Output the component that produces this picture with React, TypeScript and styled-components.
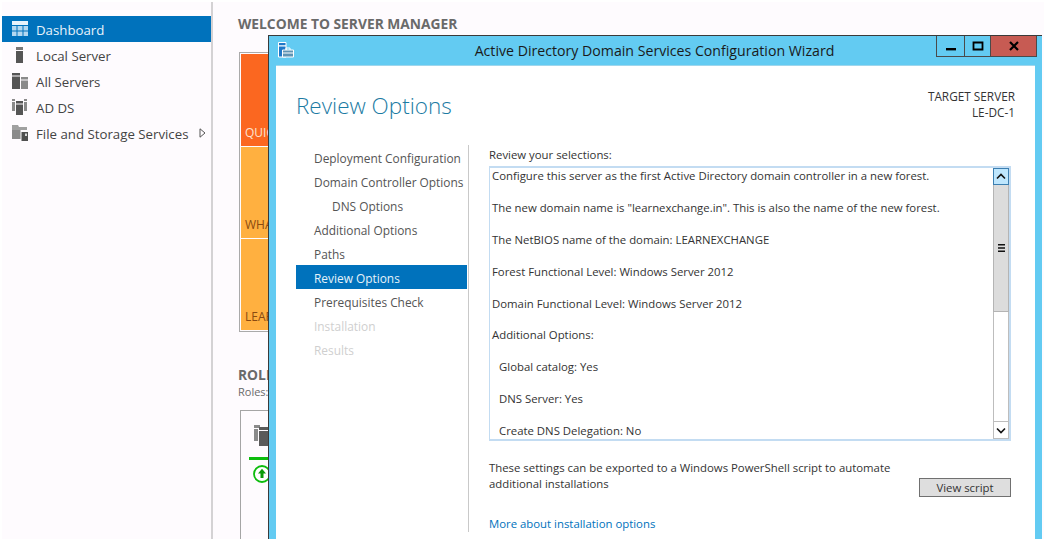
import React from "react";
import styled, { createGlobalStyle } from "styled-components";

const GlobalStyle = createGlobalStyle`
  html, body {
    margin: 0;
    padding: 0;
    background: #fff;
  }
  * {
    box-sizing: border-box;
  }
  body {
    font-family: "Open Sans", "Noto Sans", "Liberation Sans", sans-serif;
    font-size: 12px;
  }
`;

const Screen = styled.div`
  position: relative;
  width: 1044px;
  height: 539px;
  overflow: hidden;
  display: flex;
  background: #fff;
  padding: 2px 0 0 2px;
`;

const Sidebar = styled.nav`
  width: 211px;
  flex: none;
  background: #fefbfe;
  padding-top: 14px;
  border-right: 2px solid #d4d2d4;
`;

const SideRow = styled.div<{ $active?: boolean }>`
  height: 26px;
  display: flex;
  align-items: center;
  gap: 8px;
  padding-left: 10px;
  font-size: 13.25px;
  white-space: nowrap;
  background: ${(p) => (p.$active ? "#0072bc" : "transparent")};
  color: ${(p) => (p.$active ? "#e8f3fb" : "#444")};
`;

const SideLabel = styled.span`
  padding-top: 2px;
`;

const SideIcon = styled.svg`
  width: 16px;
  height: 16px;
  flex: none;
`;

const Caret = styled.svg`
  width: 7px;
  height: 10px;
  margin-left: 3px;
`;

const Main = styled.main`
  flex: 1;
  background: #fefbfe;
  padding: 14px 0 0 25px;
  min-width: 0;
`;

const Heading = styled.h2`
  margin: 0;
  font-size: 13.8px;
  line-height: 16px;
  font-weight: 700;
  color: #6a6a6a;
  white-space: nowrap;
`;

const Tiles = styled.div`
  margin: 20px 0 0 1px;
  width: 120px;
  border: 1px solid #aaa;
  padding: 1px;
  display: flex;
  flex-direction: column;
  gap: 1px;
`;

const Tile = styled.div<{ $bg: string; $h: number; $fg: string }>`
  height: ${(p) => p.$h}px;
  background: ${(p) => p.$bg};
  color: ${(p) => p.$fg};
  display: flex;
  align-items: flex-end;
  padding: 0 0 5px 4px;
  font-size: 12px;
  line-height: 16px;
`;

const RolesSection = styled.section`
  margin-top: 35px;
`;

const Sub = styled.div`
  font-size: 11px;
  line-height: 16px;
  color: #6a6a6a;
  margin-top: 1px;
`;

const RoleCard = styled.div`
  margin: 10px 0 0 2px;
  width: 120px;
  height: 140px;
  border: 1px solid #a5a5a5;
  padding: 14px 0 0 13px;
`;

const RoleIcon = styled.svg`
  display: block;
  width: 24px;
  height: 22px;
`;

const RoleBar = styled.div`
  height: 3px;
  background: #0cbc0c;
  margin: 10px 0 0 -5px;
`;

const StatusIcon = styled.svg`
  display: block;
  width: 18px;
  height: 18px;
  margin: 5px 0 0 -1px;
`;

const Wizard = styled.div`
  position: absolute;
  left: 268px;
  top: 35px;
  width: 774px;
  height: 520px;
  background: #63cbf2;
  border-top: 1px solid #3a3a3a;
  border-left: 1px solid #3a3a3a;
  display: flex;
  flex-direction: column;
`;

const TitleBar = styled.header`
  position: relative;
  height: 29px;
  flex: none;
  display: flex;
  align-items: center;
  justify-content: center;
  padding-right: 2px;
  font-size: 14.15px;
  color: #1a1a1a;
`;

const TitleIcon = styled.svg`
  position: absolute;
  left: 9px;
  top: 6px;
  width: 18px;
  height: 18px;
`;

const Controls = styled.div`
  position: absolute;
  right: 5px;
  top: 0;
  height: 21px;
  display: flex;
  border: 1px solid #4a4a4a;
  border-top: none;
`;

const Control = styled.div<{ $w: number; $close?: boolean }>`
  width: ${(p) => p.$w}px;
  display: flex;
  align-items: center;
  justify-content: center;
  background: ${(p) => (p.$close ? "#c75b53" : "transparent")};
  & + & {
    border-left: 1px solid #4a4a4a;
  }
`;

const Glyph = styled.svg`
  width: 12px;
  height: 12px;
`;

const Client = styled.div`
  flex: 1;
  margin: 0 7px 0 7px;
  background: #fff;
  border-top: 1px solid #9fd6ec;
  padding: 0 20px;
  min-height: 0;
`;

const ClientHead = styled.div`
  display: flex;
  justify-content: space-between;
  height: 79px;
`;

const PageTitle = styled.h1`
  margin: 25px 0 0;
  font-size: 22.5px;
  line-height: 30px;
  font-weight: 300;
  color: #1b7ba3;
`;

const Target = styled.div`
  margin-top: 22px;
  text-align: right;
  font-size: 11.8px;
  line-height: 16px;
  color: #333;
`;

const Columns = styled.div`
  display: flex;
  height: 387px;
`;

const Steps = styled.ul`
  list-style: none;
  margin: 0;
  padding: 0;
  width: 173px;
  flex: none;
  border-right: 1px solid #c9c9c9;
`;

const Step = styled.li<{ $active?: boolean; $off?: boolean; $sub?: boolean }>`
  height: 24px;
  width: 171px;
  display: flex;
  align-items: center;
  padding: 1px 0 0 ${(p) => (p.$sub ? 36 : 18)}px;
  font-size: 11.9px;
  white-space: nowrap;
  background: ${(p) => (p.$active ? "#0072bc" : "transparent")};
  color: ${(p) => (p.$active ? "#e6f2fa" : p.$off ? "#cfcfcf" : "#555")};
`;

const Pane = styled.div`
  flex: 1;
  padding-left: 20px;
  min-width: 0;
`;

const PaneLabel = styled.div`
  font-size: 11.36px;
  line-height: 16px;
  height: 21px;
  padding-top: 2px;
  color: #333;
`;

const ReviewBox = styled.div`
  width: 522px;
  height: 275px;
  border: 2px solid #c3dcf2;
  border-left-width: 1px;
  display: flex;
`;

const ReviewText = styled.div`
  flex: 1;
  overflow: hidden;
  padding: 0 0 0 2px;
  font-size: 11.36px;
  line-height: 16px;
  color: #333;
  white-space: nowrap;
`;

const ReviewLine = styled.p<{ $indent?: boolean }>`
  margin: 0 0 15.9px;
  padding-left: ${(p) => (p.$indent ? 7 : 0)}px;
`;

const ScrollBar = styled.div`
  width: 16px;
  flex: none;
  display: flex;
  flex-direction: column;
  border-left: 1px solid #bdbdbd;
  border-right: 1px solid #bdbdbd;
  border-bottom: 1px solid #bdbdbd;
`;

const ScrollButton = styled.div<{ $hot?: boolean }>`
  height: 17px;
  flex: none;
  margin: ${(p) => (p.$hot ? "0 -1px" : "0")};
  display: flex;
  align-items: center;
  justify-content: center;
  background: ${(p) => (p.$hot ? "#bee6fd" : "#fff")};
  border: ${(p) => (p.$hot ? "1px solid #3c7fb1" : "none")};
  border-top: ${(p) => (p.$hot ? "1px solid #3c7fb1" : "1px solid #bdbdbd")};
`;

const ScrollThumb = styled.div`
  height: 127px;
  flex: none;
  background: #dcdcdc;
  border: 1px solid #b4b4b4;
  border-top: none;
  margin: 0 -1px;
  display: flex;
  align-items: center;
  justify-content: center;
`;

const ScrollTrack = styled.div`
  flex: 1;
`;

const Footer = styled.div`
  width: 522px;
  margin-top: 19px;
  font-size: 11.36px;
  line-height: 16px;
  color: #333;
`;

const FooterText = styled.div`
  width: 420px;
  height: 32px;
`;

const ViewScript = styled.button`
  display: block;
  width: 92px;
  height: 19px;
  margin: -14px 0 0 auto;
  padding: 0;
  background: #dedede;
  border: 1px solid #707070;
  font: inherit;
  line-height: 16px;
  color: #333;
`;

const MoreLink = styled.a`
  display: block;
  margin-top: 19px;
  color: #0072bc;
  text-decoration: none;
`;

const Chevron = ({ up }: { up?: boolean }) => (
  <svg width="10" height="7" viewBox="0 0 10 7">
    <path d={up ? "M1 5.5 5 1.5 9 5.5" : "M1 1.5 5 5.5 9 1.5"} fill="none" stroke="#111" strokeWidth="1.6" />
  </svg>
);

const steps = [
  { label: "Deployment Configuration" },
  { label: "Domain Controller Options" },
  { label: "DNS Options", sub: true },
  { label: "Additional Options" },
  { label: "Paths" },
  { label: "Review Options", active: true },
  { label: "Prerequisites Check" },
  { label: "Installation", off: true },
  { label: "Results", off: true },
];

const review = [
  { text: "Configure this server as the first Active Directory domain controller in a new forest." },
  { text: 'The new domain name is "learnexchange.in". This is also the name of the new forest.' },
  { text: "The NetBIOS name of the domain: LEARNEXCHANGE" },
  { text: "Forest Functional Level: Windows Server 2012" },
  { text: "Domain Functional Level: Windows Server 2012" },
  { text: "Additional Options:" },
  { text: "Global catalog: Yes", indent: true },
  { text: "DNS Server: Yes", indent: true },
  { text: "Create DNS Delegation: No", indent: true },
];

export default function App() {
  return (
    <Screen>
      <GlobalStyle />
      <Sidebar>
        <SideRow $active>
          <SideIcon viewBox="0 0 16 16">
            <path d="M0 0h16v4H0z" fill="#e8f3fb" />
            <path d="M0 5h4.5v4.5H0zM5.5 5h5v4.5h-5zM11.5 5H16v4.5h-4.5zM0 10.5h4.5V15H0zM5.5 10.5h5V15h-5zM11.5 10.5H16V15h-4.5z" fill="#b4d8f0" />
          </SideIcon>
          <SideLabel>Dashboard</SideLabel>
        </SideRow>
        <SideRow>
          <SideIcon viewBox="0 0 16 16">
            <path d="M4 0h7v3H4z" fill="#777" />
            <path d="M4 4h7v12H4z" fill="#555" />
          </SideIcon>
          <SideLabel>Local Server</SideLabel>
        </SideRow>
        <SideRow>
          <SideIcon viewBox="0 0 16 16">
            <path d="M0 0h8v2.5H0zM0 3.5h8V16H0z" fill="#555" />
            <path d="M9 4h7v2.5H9zM9 7.5h7V16H9z" fill="#8a8a8a" />
          </SideIcon>
          <SideLabel>All Servers</SideLabel>
        </SideRow>
        <SideRow>
          <SideIcon viewBox="0 0 16 16">
            <path d="M0 0h3v2H0zM0 3h3v9H0zM12 0h3v2h-3zM12 3h3v9h-3z" fill="#8a8a8a" />
            <path d="M4 2h7v2.5H4zM4 5.5h7V16H4z" fill="#555" />
          </SideIcon>
          <SideLabel>AD DS</SideLabel>
        </SideRow>
        <SideRow>
          <SideIcon viewBox="0 0 16 16">
            <path d="M0 0h6l1 2h8v3H0z" fill="#a0a0a0" />
            <path d="M0 5h8.5v9H0z" fill="#8a8a8a" />
            <path d="M9.5 7H16v9H9.5z" fill="#4f4f4f" />
            <path d="M13 8.5h2V11h-2z" fill="#d8d8d8" />
          </SideIcon>
          <SideLabel>File and Storage Services</SideLabel>
          <Caret viewBox="0 0 7 10">
            <path d="M1 .8 6 5 1 9.2z" fill="none" stroke="#555" />
          </Caret>
        </SideRow>
      </Sidebar>

      <Main>
        <Heading>WELCOME TO SERVER MANAGER</Heading>
        <Tiles>
          <Tile $bg="#fb6720" $fg="#fde3d0" $h={92}>QUICK START</Tile>
          <Tile $bg="#ffb040" $fg="#8a4a10" $h={91}>WHAT'S NEW</Tile>
          <Tile $bg="#ffb040" $fg="#8a4a10" $h={91}>LEARN MORE</Tile>
        </Tiles>
        <RolesSection>
          <Heading>ROLES AND SERVER GROUPS</Heading>
          <Sub>Roles: 1</Sub>
          <RoleCard>
            <RoleIcon viewBox="0 0 24 22">
              <path d="M0 0h6v3H0zM0 4h4v12H0z" fill="#8a8a8a" />
              <path d="M5 2h14v3H5zM5 6h14v15H5z" fill="#5a5a5a" />
            </RoleIcon>
            <RoleBar />
            <StatusIcon viewBox="0 0 18 18">
              <circle cx="9" cy="9" r="8" fill="#fff" stroke="#0cbc0c" strokeWidth="1.8" />
              <path d="M9 3.8 13 8.4H10.5V13h-3V8.4H5z" fill="#0a9a0a" />
            </StatusIcon>
          </RoleCard>
        </RolesSection>
      </Main>

      <Wizard>
        <TitleBar>
          <TitleIcon viewBox="0 0 18 18">
            <path d="M.5.5h7.5v3.5H.5z" fill="#1f78c8" stroke="#fff" />
            <path d="M.5 4h7.5v11H.5z" fill="#1f78c8" stroke="#fff" />
            <path d="M4.5 8h11v7h-11z" fill="#5f94b4" stroke="#fff" />
            <path d="M8 8V6h4v2M4.5 11h11" fill="none" stroke="#fff" />
          </TitleIcon>
          Active Directory Domain Services Configuration Wizard
          <Controls>
            <Control $w={27}>
              <Glyph viewBox="0 0 12 12"><path d="M1 8h10v2.4H1z" fill="#000" /></Glyph>
            </Control>
            <Control $w={26}>
              <Glyph viewBox="0 0 12 12"><path d="M1.5 2.5h9v7h-9z" fill="none" stroke="#000" strokeWidth="1.8" /></Glyph>
            </Control>
            <Control $w={46} $close>
              <Glyph viewBox="0 0 12 12"><path d="M2 2l8 8M10 2l-8 8" fill="none" stroke="#000" strokeWidth="2.2" /></Glyph>
            </Control>
          </Controls>
        </TitleBar>
        <Client>
          <ClientHead>
            <PageTitle>Review Options</PageTitle>
            <Target>
              <div>TARGET SERVER</div>
              <div>LE-DC-1</div>
            </Target>
          </ClientHead>
          <Columns>
            <Steps>
              {steps.map((s) => (
                <Step key={s.label} $active={s.active} $off={s.off} $sub={s.sub}>
                  {s.label}
                </Step>
              ))}
            </Steps>
            <Pane>
              <PaneLabel>Review your selections:</PaneLabel>
              <ReviewBox>
                <ReviewText>
                  {review.map((r) => (
                    <ReviewLine key={r.text} $indent={r.indent}>
                      {r.text}
                    </ReviewLine>
                  ))}
                </ReviewText>
                <ScrollBar>
                  <ScrollButton $hot>
                    <Chevron up />
                  </ScrollButton>
                  <ScrollThumb>
                    <svg width="7" height="8" viewBox="0 0 7 8">
                      <path d="M0 0h7v1.6H0zM0 3.2h7v1.6H0zM0 6.4h7V8H0z" fill="#111" />
                    </svg>
                  </ScrollThumb>
                  <ScrollTrack />
                  <ScrollButton>
                    <Chevron />
                  </ScrollButton>
                </ScrollBar>
              </ReviewBox>
              <Footer>
                <FooterText>
                  These settings can be exported to a Windows PowerShell script to automate additional installations
                </FooterText>
                <ViewScript>View script</ViewScript>
                <MoreLink href="#">More about installation options</MoreLink>
              </Footer>
            </Pane>
          </Columns>
        </Client>
      </Wizard>
    </Screen>
  );
}
